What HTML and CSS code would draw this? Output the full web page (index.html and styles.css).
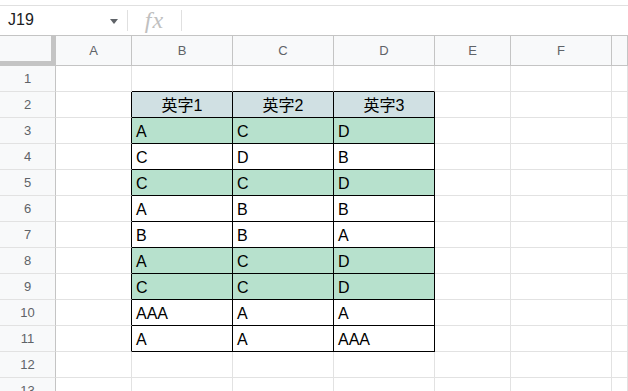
FILE: index.html
```html
<!DOCTYPE html>
<html lang="ja">
<head>
<meta charset="utf-8">
<title>Sheet</title>
<link rel="stylesheet" href="styles.css">
</head>
<body>
<div class="topgap"></div>
<div class="fbar">
  <div class="namebox"><span class="ref">J19</span><span class="tri"></span></div>
  <div class="sep"></div>
  <div class="fx">fx</div>
  <div class="sep"></div>
  <div class="formula"></div>
</div>
<div class="sheet">
  <div class="corner"></div>
  <div class="ch">A</div><div class="ch">B</div><div class="ch">C</div><div class="ch">D</div><div class="ch">E</div><div class="ch">F</div><div class="ch"></div>

  <div class="rh">1</div>
  <div class="c"></div><div class="c tt"></div><div class="c tt"></div><div class="c tt"></div><div class="c"></div><div class="c"></div><div class="c"></div>

  <div class="rh">2</div>
  <div class="c tl"></div><div class="c tb hd">英字1</div><div class="c tb hd">英字2</div><div class="c tb hd">英字3</div><div class="c"></div><div class="c"></div><div class="c"></div>

  <div class="rh">3</div>
  <div class="c tl"></div><div class="c tb g">A</div><div class="c tb g">C</div><div class="c tb g">D</div><div class="c"></div><div class="c"></div><div class="c"></div>

  <div class="rh">4</div>
  <div class="c tl"></div><div class="c tb">C</div><div class="c tb">D</div><div class="c tb">B</div><div class="c"></div><div class="c"></div><div class="c"></div>

  <div class="rh">5</div>
  <div class="c tl"></div><div class="c tb g">C</div><div class="c tb g">C</div><div class="c tb g">D</div><div class="c"></div><div class="c"></div><div class="c"></div>

  <div class="rh">6</div>
  <div class="c tl"></div><div class="c tb">A</div><div class="c tb">B</div><div class="c tb">B</div><div class="c"></div><div class="c"></div><div class="c"></div>

  <div class="rh">7</div>
  <div class="c tl"></div><div class="c tb">B</div><div class="c tb">B</div><div class="c tb">A</div><div class="c"></div><div class="c"></div><div class="c"></div>

  <div class="rh">8</div>
  <div class="c tl"></div><div class="c tb g">A</div><div class="c tb g">C</div><div class="c tb g">D</div><div class="c"></div><div class="c"></div><div class="c"></div>

  <div class="rh">9</div>
  <div class="c tl"></div><div class="c tb g">C</div><div class="c tb g">C</div><div class="c tb g">D</div><div class="c"></div><div class="c"></div><div class="c"></div>

  <div class="rh">10</div>
  <div class="c tl"></div><div class="c tb">AAA</div><div class="c tb">A</div><div class="c tb">A</div><div class="c"></div><div class="c"></div><div class="c"></div>

  <div class="rh">11</div>
  <div class="c tl"></div><div class="c tb">A</div><div class="c tb">A</div><div class="c tb">AAA</div><div class="c"></div><div class="c"></div><div class="c"></div>

  <div class="rh">12</div>
  <div class="c"></div><div class="c"></div><div class="c"></div><div class="c"></div><div class="c"></div><div class="c"></div><div class="c"></div>

  <div class="rh">13</div>
  <div class="c"></div><div class="c"></div><div class="c"></div><div class="c"></div><div class="c"></div><div class="c"></div><div class="c"></div>
</div>
</body>
</html>
```

FILE: styles.css
```css
* { box-sizing: border-box; }
html, body {
  margin: 0;
  padding: 0;
  background: #ffffff;
  overflow: hidden;
  width: 628px;
  height: 391px;
}
body {
  font-family: "Liberation Sans", Arial, "Noto Sans CJK JP", sans-serif;
  color: #000;
}
.topgap { height: 5px; background: #fff; }
.fbar {
  height: 30px;
  border-top: 1px solid #e0e0e0;
  display: flex;
  align-items: center;
}
.namebox {
  width: 127px;
  height: 29px;
  display: flex;
  align-items: center;
  justify-content: space-between;
  padding: 0 9px 0 8px;
}
.ref {
  font-size: 16px;
  color: #202124;
  padding-bottom: 1px;
}
.tri {
  width: 0;
  height: 0;
  border-left: 4px solid transparent;
  border-right: 4px solid transparent;
  border-top: 5px solid #5f6368;
  margin-top: 1px;
}
.sep {
  width: 1px;
  height: 21px;
  background: #e0e0e0;
}
.fx {
  width: 53px;
  text-align: center;
  font-family: "Liberation Serif", "Times New Roman", serif;
  font-style: italic;
  font-size: 24px;
  color: #c0c0c0;
  letter-spacing: 1px;
  line-height: 29px;
}
.formula { flex: 1; }
.sheet {
  display: grid;
  grid-template-columns: 56px 76px 101px 101px 101px 76px 101px 1fr;
  grid-template-rows: 30px;
  grid-auto-rows: 26px;
  border-top: 1px solid #c4c4c4;
}
.corner {
  background: #f8f9fa;
  border-right: 5px solid #c4c4c4;
  border-bottom: 5px solid #c4c4c4;
}
.ch {
  background: #f8f9fa;
  border-right: 1px solid #c4c4c4;
  border-bottom: 1px solid #c4c4c4;
  display: flex;
  align-items: center;
  justify-content: center;
  font-size: 13px;
  color: #5f6368;
}
.rh {
  background: #f8f9fa;
  border-right: 1px solid #c4c4c4;
  border-bottom: 1px solid #e2e2e2;
  display: flex;
  align-items: center;
  justify-content: center;
  font-size: 13px;
  color: #5f6368;
}
.c {
  border-right: 1px solid #e2e2e2;
  border-bottom: 1px solid #e2e2e2;
  display: flex;
  align-items: flex-end;
  padding: 0 4px 2px 4px;
  font-size: 16px;
  line-height: 18px;
  white-space: nowrap;
  overflow: hidden;
}
.tb {
  border-right-color: #000;
  border-bottom-color: #000;
}
.tl { border-right-color: #000; }
.tt { border-bottom-color: #000; }
.hd {
  background: #d0e0e3;
  justify-content: center;
}
.g { background: #b7e1cd; }
```
